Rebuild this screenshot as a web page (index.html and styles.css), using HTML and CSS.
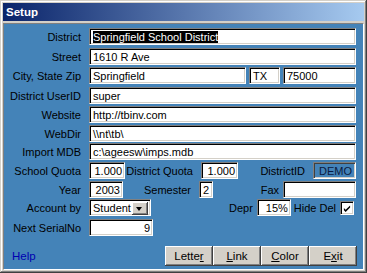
FILE: index.html
```html
<!DOCTYPE html>
<html lang="en">
<head>
  <meta charset="UTF-8" />
  <title>Setup</title>
  <link rel="stylesheet" href="styles.css">
</head>
<body>
  <div class="window">
    <div class="titlebar">Setup</div>

    <div class="client">
      <div class="row">
        <span class="label">District</span>
        <div class="field grow"><span class="selected">Springfield School District</span></div>
      </div>
      <div class="row loose">
        <span class="label">Street</span>
        <div class="field grow">1610 R Ave</div>
      </div>
      <div class="row">
        <span class="label">City, State Zip</span>
        <div class="field city">Springfield</div>
        <div class="field state">TX</div>
        <div class="field grow">75000</div>
      </div>
      <div class="row loose">
        <span class="label">District UserID</span>
        <div class="field grow">super</div>
      </div>
      <div class="row">
        <span class="label">Website</span>
        <div class="field grow">http://tbinv.com</div>
      </div>
      <div class="row">
        <span class="label">WebDir</span>
        <div class="field grow">\\nt\tb\</div>
      </div>
      <div class="row snug">
        <span class="label">Import MDB</span>
        <div class="field grow">c:\ageesw\imps.mdb</div>
      </div>
      <div class="row">
        <span class="label">School Quota</span>
        <div class="field num w36">1.000</div>
        <span class="label mid">District Quota</span>
        <div class="field num w37">1.000</div>
        <span class="label fill">DistrictID</span>
        <div class="demo">DEMO</div>
      </div>
      <div class="row">
        <span class="label">Year</span>
        <div class="field num w34">2003</div>
        <span class="label mid">Semester</span>
        <div class="field w14">2</div>
        <span class="label fill tight">Fax</span>
        <div class="field grow"></div>
      </div>
      <div class="row snug">
        <span class="label">Account by</span>
        <div class="field select">
          <span>Student</span>
          <span class="drop"></span>
        </div>
        <span class="label fill tight">Depr</span>
        <div class="field num w34">15%</div>
        <span class="label tight after">Hide Del</span>
        <div class="field check">
          <svg width="9" height="9" viewBox="0 0 9 9"><path d="M1 4 L3 6 L8 1 L8 3.5 L3 8.5 L1 6.5 Z" fill="#000"/></svg>
        </div>
      </div>
      <div class="row loose">
        <span class="label">Next SerialNo</span>
        <div class="field num w64">9</div>
      </div>

      <div class="footer">
        <span class="help">Help</span>
        <div class="buttons">
          <div class="btn">Lette<u>r</u></div>
          <div class="btn"><u>L</u>ink</div>
          <div class="btn"><u>C</u>olor</div>
          <div class="btn">E<u>x</u>it</div>
        </div>
      </div>
    </div>
  </div>
</body>
</html>
```

FILE: styles.css
```css
:root {
  --face: #d4d0c8;
  --form: #4483b8;
  --shadow: #808080;
  --dark: #404040;
  --ink: #000;
}

body {
  margin: 0;
  padding: 0;
  background: var(--face);
  font-family: 'Liberation Sans', Arial, sans-serif;
  font-size: 11px;
  color: var(--ink);
}

.window {
  width: 367px;
  height: 273px;
  box-sizing: border-box;
  padding: 3px;
  background: var(--face);
  box-shadow: inset -1px -1px var(--dark), inset 1px 1px var(--face),
              inset -2px -2px var(--shadow), inset 2px 2px #fff;
  display: flex;
  flex-direction: column;
}

.titlebar {
  height: 18px;
  line-height: 18px;
  padding-left: 3px;
  background: linear-gradient(to right, #0a246a, #a6caf0);
  color: #fff;
  font-weight: bold;
  font-size: 11.5px;
}

.client {
  flex: 1;
  margin-top: 2px;
  border: 1px solid;
  border-color: var(--shadow) #fff #fff var(--shadow);
  background: var(--form);
  padding: 4px 7px 0 0;
  display: flex;
  flex-direction: column;
  gap: 2px;
}

.row {
  display: flex;
  align-items: center;
  height: 17px;
}

.row.loose {
  margin-top: 1px;
}

.row.snug {
  margin-top: -1px;
}

.label {
  width: 77px;
  margin-right: 8px;
  text-align: right;
  white-space: nowrap;
  flex-shrink: 0;
}

.label.mid {
  width: 68px;
}

.label.fill {
  width: auto;
  flex: 1;
}

.label.tight {
  margin-right: 4px;
}

.label.after {
  width: auto;
  margin-left: 3px;
}

.field {
  height: 17px;
  box-sizing: border-box;
  border: 1px solid;
  border-color: var(--shadow) #fff #fff var(--shadow);
  box-shadow: inset 1px 1px #000, inset -1px -1px var(--face);
  background: #fff;
  padding: 1px 2px 0 3px;
  line-height: 14px;
  white-space: nowrap;
  overflow: hidden;
  flex-shrink: 0;
}

.field.grow {
  flex: 1;
}

.field.city {
  width: 157px;
  margin-right: 3px;
}

.field.state {
  width: 31px;
  margin-right: 3px;
}

.num {
  text-align: right;
}

.w36 { width: 36px; }
.w37 { width: 37px; }
.w34 { width: 34px; }
.w14 { width: 14px; }
.w64 { width: 64px; }

.selected {
  background: #000;
  color: #fff;
}

.demo {
  width: 43px;
  height: 17px;
  box-sizing: border-box;
  border: 1px solid;
  border-color: var(--shadow) #fff #fff var(--shadow);
  box-shadow: inset 1px 1px var(--dark), inset -1px -1px var(--face);
  text-align: right;
  padding: 1px 3px 0 0;
  line-height: 14px;
  color: #0a1a40;
}

.select {
  width: 62px;
  display: flex;
  align-items: center;
  justify-content: space-between;
  padding-right: 2px;
}

.drop {
  width: 16px;
  height: 13px;
  box-sizing: border-box;
  background: var(--face);
  box-shadow: inset -1px -1px var(--dark), inset 1px 1px #fff, inset -2px -2px var(--shadow);
  position: relative;
}

.drop::after {
  content: "";
  position: absolute;
  left: 4px;
  top: 5px;
  border-left: 3.5px solid transparent;
  border-right: 3.5px solid transparent;
  border-top: 4px solid #000;
}

.check {
  width: 14px;
  height: 14px;
  padding: 2px;
  margin-right: 2px;
  display: flex;
}

.footer {
  margin-top: 8px;
  display: flex;
  align-items: center;
  justify-content: space-between;
}

.help {
  margin-left: 8px;
  color: #0000b0;
  font-size: 11.5px;
}

.buttons {
  display: flex;
  margin-right: -1px;
}

.btn {
  width: 48px;
  height: 20px;
  box-sizing: border-box;
  background: var(--face);
  box-shadow: inset -1px -1px var(--dark), inset 1px 1px #fff, inset -2px -2px var(--shadow);
  text-align: center;
  line-height: 20px;
  font-size: 11.5px;
}
```
